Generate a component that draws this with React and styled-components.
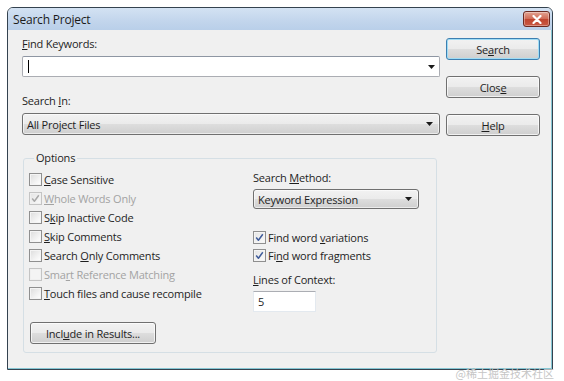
import React from "react";
import styled, { createGlobalStyle, css } from "styled-components";

const Global = createGlobalStyle`
  html, body { margin: 0; padding: 0; background: #ffffff; }
  * { box-sizing: border-box; }
`;

const Page = styled.div`
  position: relative;
  width: 564px;
  height: 381px;
  overflow: hidden;
  background: #ffffff;
  font-family: "Open Sans", "Noto Sans", sans-serif;
  font-size: 11px;
  letter-spacing: -0.2px;
  color: #1e1e1e;
`;

const Window = styled.div`
  margin: 7px 0 0 7px;
  width: 546px;
  height: 363px;
  border: 1px solid #34424f;
  border-radius: 6px 6px 0 0;
  background: #f0f0f0;
  box-shadow: inset -1px -1px 0 #86c6d3;
  display: flex;
  flex-direction: column;
  overflow: hidden;
`;

const TitleBar = styled.div`
  height: 22px;
  flex: none;
  display: flex;
  align-items: center;
  justify-content: space-between;
  padding: 0 2px 0 5px;
  background: linear-gradient(#d3e2f3, #c2d5ec 60%, #b9cfe9);
  font-size: 12px;
  color: #1b1b1b;
`;

const CloseBtn = styled.div`
  width: 27px;
  height: 16px;
  border: 1px solid #6b2a22;
  border-radius: 3px;
  background: linear-gradient(#e2a392, #d06a55 50%, #c0452f 51%, #c95a45);
  display: flex;
  align-items: center;
  justify-content: center;
  box-shadow: inset 0 0 0 1px rgba(255, 255, 255, 0.35);
`;

const Body = styled.div`
  flex: 1;
  display: flex;
  gap: 6px;
  padding: 6px 0 0 14px;
`;

const LeftCol = styled.div`
  width: 418px;
  display: flex;
  flex-direction: column;
`;

const RightCol = styled.div`
  width: 94px;
  display: flex;
  flex-direction: column;
  gap: 16px;
  padding-top: 2px;
`;

const Label = styled.div`
  line-height: 16px;
  height: 16px;
  white-space: nowrap;
  margin-top: ${(p) => p.$mt || 0}px;
  color: ${(p) => (p.$disabled ? "#a3a3a3" : "#1e1e1e")};
`;

const Key = styled.span`
  text-decoration: underline;
  text-underline-offset: 1px;
`;

const Combo = styled.div`
  margin-top: 4px;
  height: 21px;
  border: 1px solid #abadb3;
  border-top-color: #8e96a3;
  border-radius: 2px;
  background: #ffffff;
  display: flex;
  align-items: center;
  justify-content: space-between;
  padding: 0 4px 0 5px;
`;

const Caret = styled.span`
  width: 1px;
  height: 13px;
  background: #000;
`;

const Arrow = () => (
  <svg width="7" height="4" viewBox="0 0 7 4">
    <path d="M0 0 H7 L3.5 4 Z" fill="#1a1a1a" />
  </svg>
);

const Select = styled.div`
  margin-top: ${(p) => p.$mt}px;
  width: ${(p) => p.$w}px;
  height: ${(p) => p.$h}px;
  border: 1px solid #707070;
  border-radius: 3px;
  background: linear-gradient(#f2f2f2, #ebebeb 48%, #dddddd 52%, #cfcfcf);
  box-shadow: inset 0 0 0 1px rgba(255, 255, 255, 0.6);
  display: flex;
  align-items: center;
  justify-content: space-between;
  padding: 0 6px 0 4px;
  white-space: nowrap;
`;

const Button = styled.div`
  width: ${(p) => p.$w || 94}px;
  height: 22px;
  border: 1px solid ${(p) => (p.$default ? "#3c7fb1" : "#707070")};
  border-radius: 3px;
  background: linear-gradient(#f2f2f2, #ebebeb 48%, #dddddd 52%, #cfcfcf);
  box-shadow: inset 0 0 0 1px
    ${(p) => (p.$default ? "#9fdcf5" : "rgba(255,255,255,0.7)")};
  display: flex;
  align-items: center;
  justify-content: center;
  margin-top: ${(p) => p.$mt || 0}px;
  margin-left: ${(p) => p.$ml || 0}px;
  white-space: nowrap;
`;

const Group = styled.fieldset`
  margin: 15px 0 0 1px;
  width: 414px;
  height: 203px;
  border: 1px solid #d5dfe5;
  border-radius: 3px;
  padding: 0 0 9px 5px;
`;

const Legend = styled.legend`
  margin-left: 5px;
  padding: 0 2px;
  line-height: 16px;
`;

const GroupGrid = styled.div`
  display: grid;
  grid-template-columns: 224px 1fr;
  padding-top: 4px;
`;

const Column = styled.div`
  display: flex;
  flex-direction: column;
`;

const CheckRow = styled.div`
  display: flex;
  align-items: center;
  gap: 2px;
  height: ${(p) => p.$h || 19}px;
  margin-top: ${(p) => p.$mt || 0}px;
  white-space: nowrap;
  color: ${(p) => (p.$disabled ? "#a3a3a3" : "#1e1e1e")};
`;

const Box = styled.span`
  width: 13px;
  height: 13px;
  flex: none;
  border: 1px solid ${(p) => (p.$disabled ? "#c4c4c4" : "#8f8f8f")};
  background: ${(p) =>
    p.$disabled
      ? "#f4f4f4"
      : "linear-gradient(135deg, #dcdcdc, #f6f6f6 70%, #ffffff)"};
  box-shadow: inset 0 0 0 1px ${(p) => (p.$disabled ? "#f0f0f0" : "#f4f4f4")};
  display: flex;
  align-items: center;
  justify-content: center;
  ${(p) =>
    p.$checked &&
    css`
      background: linear-gradient(135deg, #e4e4e4, #fafafa);
    `}
`;

const Check = ({ color }) => (
  <svg width="9" height="9" viewBox="0 0 9 9">
    <path
      d="M1.2 4.6 L3.4 7.2 L7.8 1.3"
      fill="none"
      stroke={color}
      strokeWidth="1.5"
      strokeLinejoin="round"
    />
  </svg>
);

const CheckBox = ({ checked, disabled, children, h, mt }) => (
  <CheckRow $disabled={disabled} $h={h} $mt={mt}>
    <Box $checked={checked} $disabled={disabled}>
      {checked && <Check color={disabled ? "#a8a8a8" : "#3e5b9a"} />}
    </Box>
    <span>{children}</span>
  </CheckRow>
);

const TextInput = styled.div`
  margin-top: 3px;
  width: 63px;
  height: 21px;
  background: #ffffff;
  border: 1px solid #e3e9ef;
  border-top-color: #abadb3;
  display: flex;
  align-items: center;
  padding-left: 4px;
`;

const Watermark = styled.div`
  position: absolute;
  right: 10px;
  bottom: 1px;
  font-family: "Noto Sans CJK SC", sans-serif;
  font-size: 11px;
  line-height: 14px;
  letter-spacing: 0;
  color: #c6c6c6;
`;

export default function App() {
  return (
    <Page>
      <Global />
      <Window>
        <TitleBar>
          <span>Search Project</span>
          <CloseBtn>
            <svg width="10" height="9" viewBox="0 0 10 9">
              <path
                d="M1.5 1 L8.5 8 M8.5 1 L1.5 8"
                stroke="#ffffff"
                strokeWidth="2.2"
                strokeLinecap="round"
              />
            </svg>
          </CloseBtn>
        </TitleBar>
        <Body>
          <LeftCol>
            <Label>
              <Key>F</Key>ind Keywords:
            </Label>
            <Combo>
              <Caret />
              <Arrow />
            </Combo>
            <Label $mt={16}>
              Search <Key>I</Key>n:
            </Label>
            <Select $mt={4} $w={418} $h={22}>
              <span>All Project Files</span>
              <Arrow />
            </Select>
            <Group>
              <Legend>Options</Legend>
              <GroupGrid>
                <Column>
                  <CheckBox>
                    <Key>C</Key>ase Sensitive
                  </CheckBox>
                  <CheckBox checked disabled>
                    <Key>W</Key>hole Words Only
                  </CheckBox>
                  <CheckBox>
                    S<Key>k</Key>ip Inactive Code
                  </CheckBox>
                  <CheckBox>
                    <Key>S</Key>kip Comments
                  </CheckBox>
                  <CheckBox>
                    Search <Key>O</Key>nly Comments
                  </CheckBox>
                  <CheckBox disabled>
                    Sma<Key>r</Key>t Reference Matching
                  </CheckBox>
                  <CheckBox>
                    <Key>T</Key>ouch files and cause recompile
                  </CheckBox>
                  <Button $w={126} $mt={19} $ml={1}>
                    Incl<Key>u</Key>de in Results...
                  </Button>
                </Column>
                <Column>
                  <Label>
                    Search <Key>M</Key>ethod:
                  </Label>
                  <Select $mt={3} $w={166} $h={20}>
                    <span>Keyword Expression</span>
                    <Arrow />
                  </Select>
                  <CheckBox checked h={18} mt={19}>
                    Find word <Key>v</Key>ariations
                  </CheckBox>
                  <CheckBox checked h={18}>
                    Fi<Key>n</Key>d word fragments
                  </CheckBox>
                  <Label $mt={8}>
                    <Key>L</Key>ines of Context:
                  </Label>
                  <TextInput>5</TextInput>
                </Column>
              </GroupGrid>
            </Group>
          </LeftCol>
          <RightCol>
            <Button $default>
              Se<Key>a</Key>rch
            </Button>
            <Button>
              Clos<Key>e</Key>
            </Button>
            <Button>
              <Key>H</Key>elp
            </Button>
          </RightCol>
        </Body>
      </Window>
      <Watermark>@稀土掘金技术社区</Watermark>
    </Page>
  );
}
